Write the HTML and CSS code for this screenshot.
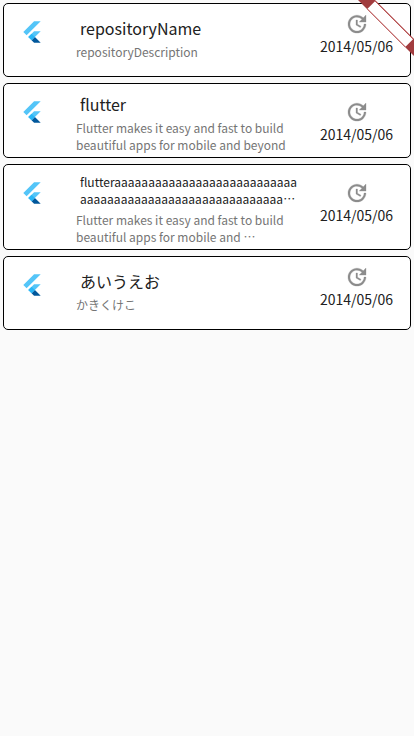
FILE: index.html
```html
<!DOCTYPE html>
<html lang="ja">
<head>
<meta charset="utf-8">
<title>Repositories</title>
<link rel="stylesheet" href="styles.css">
</head>
<body>
<svg class="defs" aria-hidden="true">
  <symbol id="logo" viewBox="0 0 166 202">
    <path fill="#54c5f8" d="M37.7 128.9 9.8 101 100.4 10.4h55.8zM156.2 94h-55.8l-48.8 48.8 27.9 27.9z"/>
    <path fill="#01579b" d="m79.5 170.7 20.9 20.9h55.8l-48.8-48.8z"/>
    <path fill="#29b6f6" d="m51.6 142.8 27.9-27.9 27.9 27.9-27.9 27.9z"/>
  </symbol>
  <symbol id="update" viewBox="0 0 24 24">
    <path fill="#8c8c8c" stroke="#8c8c8c" stroke-width=".3" d="M21 10.12h-6.78l2.74-2.82c-2.73-2.7-7.15-2.8-9.88-.1-2.73 2.71-2.73 7.08 0 9.79s7.15 2.71 9.88 0C18.32 15.65 19 14.08 19 12.1h2c0 1.98-.88 4.55-2.64 6.29-3.51 3.48-9.21 3.48-12.72 0-3.5-3.47-3.53-9.11-.02-12.58s9.14-3.47 12.65 0L21 3v7.12zM12.5 8v4.25l3.5 2.08-.72 1.21L11 13V8h1.5z"/>
  </symbol>
</svg>
<main class="list">
  <article class="card">
    <svg class="logo"><use href="#logo"/></svg>
    <div class="body">
      <h2 class="title">repositoryName</h2>
      <p class="desc">repositoryDescription</p>
    </div>
    <div class="meta"><svg class="update"><use href="#update"/></svg><time>2014/05/06</time></div>
  </article>
  <article class="card card-two">
    <svg class="logo"><use href="#logo"/></svg>
    <div class="body">
      <h2 class="title">flutter</h2>
      <p class="desc">Flutter makes it easy and fast to build<br>beautiful apps for mobile and beyond</p>
    </div>
    <div class="meta"><svg class="update"><use href="#update"/></svg><time>2014/05/06</time></div>
  </article>
  <article class="card card-long">
    <svg class="logo"><use href="#logo"/></svg>
    <div class="body">
      <h2 class="title title-small">flutteraaaaaaaaaaaaaaaaaaaaaaaaaaa<br>aaaaaaaaaaaaaaaaaaaaaaaaaaaaaa…</h2>
      <p class="desc">Flutter makes it easy and fast to build<br>beautiful apps for mobile and …</p>
    </div>
    <div class="meta"><svg class="update"><use href="#update"/></svg><time>2014/05/06</time></div>
  </article>
  <article class="card">
    <svg class="logo"><use href="#logo"/></svg>
    <div class="body">
      <h2 class="title">あいうえお</h2>
      <p class="desc">かきくけこ</p>
    </div>
    <div class="meta"><svg class="update"><use href="#update"/></svg><time>2014/05/06</time></div>
  </article>
</main>
<svg class="ribbon" viewBox="0 0 56 56" aria-hidden="true">
  <path fill="#a13c3e" d="M0 0h17l39 39v17z"/>
  <path fill="#fff" d="M9.5 8.8 17 1.3 55 39.3 47.5 46.8z"/>
  <path class="ribbon-edge" d="M9.5 9.2 47.2 46.9M17 .8 55 38.8"/>
</svg>
</body>
</html>
```
FILE: styles.css
```css
* { box-sizing: border-box; }
body {
  margin: 0;
  min-height: 736px;
  background: #fafafa;
  color: #212121;
  font-family: "Noto Sans CJK JP", sans-serif;
}
.defs { display: none; }
.list {
  display: flex;
  flex-direction: column;
  gap: 6px;
  padding: 3px;
}
.card {
  display: flex;
  height: 74px;
  border: 1px solid #000;
  border-radius: 5px;
  background: #fff;
}
.card-two { height: 75px; }
.card-long { height: 86px; }
.logo {
  flex: none;
  width: 20px;
  height: 24px;
  margin: 16px 34.5px 0 17.5px;
}
.body {
  flex: none;
  width: 226px;
  padding-top: 12px;
  white-space: nowrap;
}
.card-two .body { padding-top: 8px; }
.card-long .body { padding-top: 8px; }
.title {
  margin: 0 0 3px 4px;
  font-size: 16px;
  font-weight: 400;
  line-height: 24px;
}
.title-small {
  font-size: 12px;
  line-height: 17px;
  margin-bottom: 4px;
  letter-spacing: 0.015px;
}
.desc {
  margin: 0;
  color: #757575;
  font-size: 12px;
  line-height: 17px;
}
.meta {
  flex: none;
  display: flex;
  flex-direction: column;
  align-items: center;
  width: 109px;
  padding-top: 8px;
  font-size: 14px;
  line-height: 20px;
}
.card-two .meta, .card-long .meta { padding-top: 16px; }
.update {
  width: 24px;
  height: 24px;
  margin-left: 1px;
}
.ribbon {
  position: absolute;
  top: 0;
  right: 0;
  width: 56px;
  height: 56px;
}
.ribbon-edge {
  fill: none;
  stroke: #b8383a;
  stroke-width: 0.7;
}
```
